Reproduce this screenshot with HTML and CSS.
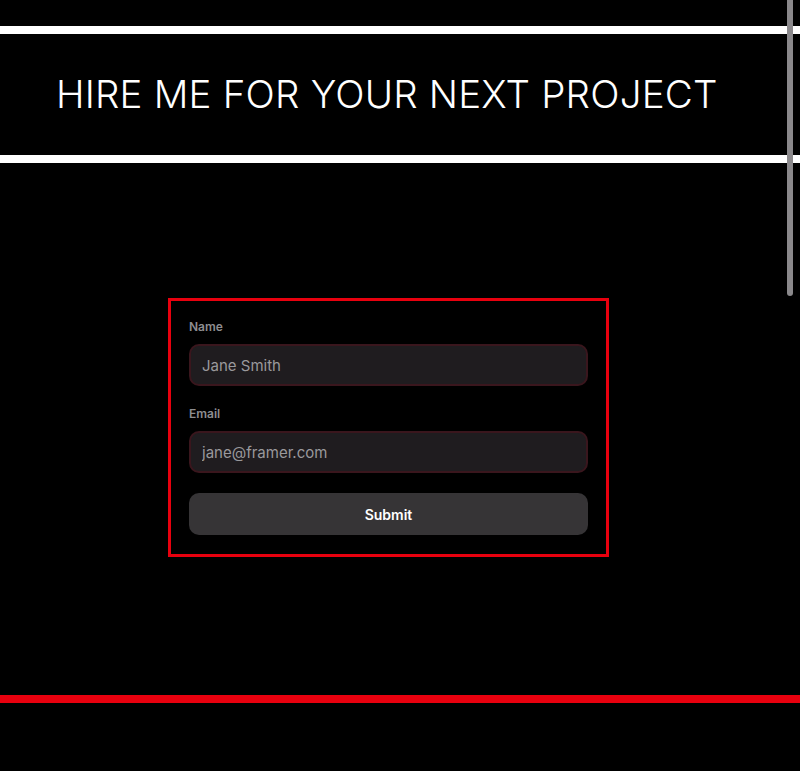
FILE: index.html
```html
<!DOCTYPE html>
<html lang="en">
<head>
<meta charset="utf-8">
<title>Hire me</title>
<link rel="stylesheet" href="styles.css">
</head>
<body>
<div class="page">
  <header class="hero">
    <div class="rule rule-white"></div>
    <div class="band">
      <h1 class="title">HIRE ME FOR YOUR NEXT PROJECT</h1>
    </div>
    <div class="rule rule-white"></div>
  </header>
  <main class="main">
    <form class="form">
      <label class="field">
        <span class="label">Name</span>
        <input class="input" type="text" placeholder="Jane Smith">
      </label>
      <label class="field">
        <span class="label">Email</span>
        <input class="input" type="email" placeholder="jane@framer.com">
      </label>
      <button class="submit" type="button">Submit</button>
    </form>
  </main>
  <div class="rule rule-red"></div>
  <div class="scrollbar"></div>
</div>
</body>
</html>
```
FILE: styles.css
```css
* { box-sizing: border-box; }
html, body {
  margin: 0;
  padding: 0;
  background: #000;
  height: 100%;
  overflow: hidden;
}
body {
  font-family: Inter, "Noto Sans", sans-serif;
  color: #fff;
}
.page {
  position: relative;
  width: 800px;
  height: 771px;
  padding-top: 26px;
}
.rule {
  height: 8px;
  width: 100%;
}
.rule-white { background: #fff; }
.rule-red { background: #e8000e; }
.band {
  height: 121px;
  display: flex;
  align-items: center;
  padding-left: 56px;
}
.title {
  margin: 0;
  font-size: 38.5px;
  font-weight: 300;
  line-height: 1;
  letter-spacing: 0.2px;
  color: #fff;
  white-space: nowrap;
}
.main {
  display: flex;
  justify-content: center;
  padding: 135px 23px 0 0;
  height: 532px;
}
.form {
  width: 441px;
  height: 259px;
  border: 3px solid #e8000e;
  padding: 18px;
  display: flex;
  flex-direction: column;
  gap: 20px;
}
.field {
  display: flex;
  flex-direction: column;
  gap: 10px;
}
.label {
  font-size: 12px;
  line-height: 15px;
  font-weight: 600;
  color: #8e8d90;
}
.input {
  height: 42px;
  width: 100%;
  border-radius: 10px;
  border: 2px solid #3a161d;
  background: #1f1c1f;
  padding: 0 11px;
  font-family: Inter, "Noto Sans", sans-serif;
  font-size: 15px;
  color: #fff;
  outline: none;
}
.input::placeholder { color: #9a999c; }
.submit {
  height: 42px;
  width: 100%;
  border: 0;
  border-radius: 10px;
  background: #363436;
  color: #fff;
  font-family: Inter, "Noto Sans", sans-serif;
  font-size: 14px;
  font-weight: 600;
}
.scrollbar {
  position: absolute;
  top: 0;
  left: 787px;
  width: 6px;
  height: 296px;
  background: #8a888b;
  border-radius: 0 0 3px 3px;
}
```
